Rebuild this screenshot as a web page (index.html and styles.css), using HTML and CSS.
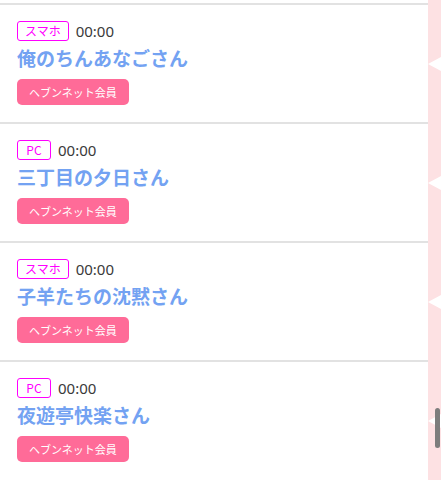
FILE: index.html
```html
<!DOCTYPE html>
<html lang="ja">
<head>
  <meta charset="UTF-8">
  <meta name="viewport" content="width=device-width, initial-scale=1.0">
  <title>待機一覧</title>
  <link rel="stylesheet" href="styles.css">
</head>
<body>
  <div class="list">
    <div class="item">
      <div class="item-body">
        <div class="meta"><span class="device">スマホ</span><span class="time">00:00</span></div>
        <div class="name">俺のちんあなごさん</div>
        <span class="member">ヘブンネット会員</span>
      </div>
      <div class="side"><span class="arrow"></span></div>
    </div>
    <div class="item">
      <div class="item-body">
        <div class="meta"><span class="device">PC</span><span class="time">00:00</span></div>
        <div class="name">三丁目の夕日さん</div>
        <span class="member">ヘブンネット会員</span>
      </div>
      <div class="side"><span class="arrow"></span></div>
    </div>
    <div class="item">
      <div class="item-body">
        <div class="meta"><span class="device">スマホ</span><span class="time">00:00</span></div>
        <div class="name">子羊たちの沈黙さん</div>
        <span class="member">ヘブンネット会員</span>
      </div>
      <div class="side"><span class="arrow"></span></div>
    </div>
    <div class="item">
      <div class="item-body">
        <div class="meta"><span class="device">PC</span><span class="time">00:00</span></div>
        <div class="name">夜遊亭快楽さん</div>
        <span class="member">ヘブンネット会員</span>
      </div>
      <div class="side"><span class="arrow"></span></div>
    </div>
  </div>
  <div class="scrollbar"></div>
</body>
</html>
```

FILE: styles.css
```css
/* 基本 */
body {
  margin: 0;
  height: 480px;
  overflow: hidden;
  position: relative;
  font-family: "Noto Sans CJK JP", "Noto Sans", sans-serif;
  background: linear-gradient(to left, #fde1e3 13px, #fff 13px);
}

/* 一覧 */
.list {
  padding-top: 3px;
}

.item {
  display: grid;
  grid-template-columns: 1fr 13px;
}

.item-body {
  border-top: 2px solid #e2e2e2;
  padding: 16px 17px 17px;
  display: flex;
  flex-direction: column;
  align-items: flex-start;
}

/* 端末・時刻 */
.meta {
  display: flex;
  align-items: center;
  height: 20px;
}

.device {
  box-sizing: border-box;
  height: 20px;
  min-width: 34px;
  padding: 0 7px;
  border: 1px solid #ff00ff;
  border-radius: 3px;
  color: #ff00ff;
  font-size: 12px;
  line-height: 18px;
  text-align: center;
}

.time {
  margin-left: 7px;
  font-family: "Noto Sans", sans-serif;
  font-size: 15px;
  color: #3a3a3a;
}

/* 名前 */
.name {
  margin-top: 4px;
  font-size: 19px;
  line-height: 26px;
  font-weight: bold;
  color: #73a2f2;
}

/* 会員ボタン */
.member {
  margin-top: 8px;
  height: 26px;
  padding: 0 12px;
  border-radius: 5px;
  background-color: #ff6b98;
  color: #fff;
  font-size: 11px;
  line-height: 26px;
}

/* 右の矢印 */
.side {
  display: flex;
  align-items: center;
  justify-content: flex-end;
}

.arrow {
  width: 0;
  height: 0;
  border-top: 7px solid transparent;
  border-bottom: 7px solid transparent;
  border-right: 13px solid #fff;
  margin-top: 2px;
}

.scrollbar {
  position: absolute;
  right: 1px;
  top: 408px;
  width: 5px;
  height: 40px;
  border-radius: 3px;
  background-color: #7d7d7d;
}
```
